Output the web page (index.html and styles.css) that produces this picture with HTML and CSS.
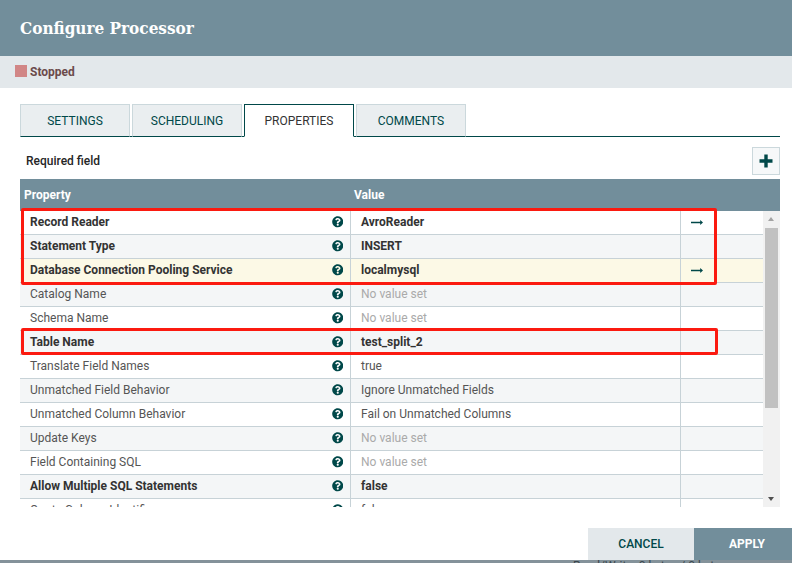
FILE: index.html
```html
<!DOCTYPE html>
<html lang="en">
<head>
<meta charset="utf-8">
<title>Configure Processor</title>
<link rel="stylesheet" href="styles.css">
</head>
<body>
<div class="dialog">
  <header class="title-bar">Configure Processor</header>
  <div class="status-bar"><span class="status-square"></span><span class="status-text">Stopped</span></div>
  <main class="content">
    <nav class="tabs">
      <div class="tab">SETTINGS</div>
      <div class="tab">SCHEDULING</div>
      <div class="tab active">PROPERTIES</div>
      <div class="tab">COMMENTS</div>
    </nav>
    <div class="toolbar">
      <span class="required">Required field</span>
      <button class="add-btn"><svg width="14" height="14" viewBox="0 0 14 14"><path d="M5.3 0.5h3.4v4.8h4.8v3.4H8.7v4.8H5.3V8.7H.5V5.3h4.8z" fill="#004849"/></svg></button>
    </div>
    <div class="grid-head"><div class="hcell hprop">Property</div><div class="hcell">Value</div></div>
    <div class="grid-wrap">
      <div class="rows">
        <div class="row"><div class="c-name b">Record Reader</div><div class="c-help"><svg class="help" viewBox="0 0 512 512"><use href="#q"/></svg></div><div class="c-val b">AvroReader</div><div class="c-act"><svg class="arrow" viewBox="0 0 12 7"><use href="#a"/></svg></div></div>
        <div class="row alt"><div class="c-name b">Statement Type</div><div class="c-help"><svg class="help" viewBox="0 0 512 512"><use href="#q"/></svg></div><div class="c-val b">INSERT</div><div class="c-act"></div></div>
        <div class="row hl"><div class="c-name b">Database Connection Pooling Service</div><div class="c-help"><svg class="help" viewBox="0 0 512 512"><use href="#q"/></svg></div><div class="c-val b">localmysql</div><div class="c-act"><svg class="arrow" viewBox="0 0 12 7"><use href="#a"/></svg></div></div>
        <div class="row alt"><div class="c-name">Catalog Name</div><div class="c-help"><svg class="help" viewBox="0 0 512 512"><use href="#q"/></svg></div><div class="c-val none">No value set</div><div class="c-act"></div></div>
        <div class="row"><div class="c-name">Schema Name</div><div class="c-help"><svg class="help" viewBox="0 0 512 512"><use href="#q"/></svg></div><div class="c-val none">No value set</div><div class="c-act"></div></div>
        <div class="row alt"><div class="c-name b">Table Name</div><div class="c-help"><svg class="help" viewBox="0 0 512 512"><use href="#q"/></svg></div><div class="c-val b">test_split_2</div><div class="c-act"></div></div>
        <div class="row"><div class="c-name">Translate Field Names</div><div class="c-help"><svg class="help" viewBox="0 0 512 512"><use href="#q"/></svg></div><div class="c-val">true</div><div class="c-act"></div></div>
        <div class="row alt"><div class="c-name">Unmatched Field Behavior</div><div class="c-help"><svg class="help" viewBox="0 0 512 512"><use href="#q"/></svg></div><div class="c-val">Ignore Unmatched Fields</div><div class="c-act"></div></div>
        <div class="row"><div class="c-name">Unmatched Column Behavior</div><div class="c-help"><svg class="help" viewBox="0 0 512 512"><use href="#q"/></svg></div><div class="c-val">Fail on Unmatched Columns</div><div class="c-act"></div></div>
        <div class="row alt"><div class="c-name">Update Keys</div><div class="c-help"><svg class="help" viewBox="0 0 512 512"><use href="#q"/></svg></div><div class="c-val none">No value set</div><div class="c-act"></div></div>
        <div class="row"><div class="c-name">Field Containing SQL</div><div class="c-help"><svg class="help" viewBox="0 0 512 512"><use href="#q"/></svg></div><div class="c-val none">No value set</div><div class="c-act"></div></div>
        <div class="row alt"><div class="c-name b">Allow Multiple SQL Statements</div><div class="c-help"><svg class="help" viewBox="0 0 512 512"><use href="#q"/></svg></div><div class="c-val b">false</div><div class="c-act"></div></div>
        <div class="row"><div class="c-name">Quote Column Identifiers</div><div class="c-help"><svg class="help" viewBox="0 0 512 512"><use href="#q"/></svg></div><div class="c-val">false</div><div class="c-act"></div></div>
      </div>
      <div class="scrollbar">
        <div class="sb-up"></div>
        <div class="sb-track"><div class="sb-thumb"></div></div>
        <div class="sb-down"></div>
      </div>
      <div class="mark mark-a"></div>
      <div class="mark mark-b"></div>
    </div>
    <div class="footer">
      <div class="btn cancel">CANCEL</div>
      <div class="btn apply">APPLY</div>
    </div>
  </main>
  <div class="behind">Read/Write  0 bytes / 0 bytes</div>
</div>
<svg class="defs" width="0" height="0">
  <defs>
    <path id="q" fill="#004849" d="M504 256c0 136.997-111.043 248-248 248S8 392.997 8 256C8 119.083 119.043 8 256 8s248 111.083 248 248zM262.655 90c-54.497 0-89.255 22.957-116.549 63.758-3.536 5.286-2.353 12.415 2.715 16.258l34.699 26.31c5.205 3.947 12.621 3.008 16.665-2.122 17.864-22.658 30.113-35.797 57.303-35.797 20.429 0 45.698 13.148 45.698 32.958 0 14.976-12.363 22.667-32.534 33.976C247.128 238.528 216 254.941 216 296v4c0 6.627 5.373 12 12 12h56c6.627 0 12-5.373 12-12v-1.333c0-28.462 83.186-29.647 83.186-106.667 0-58.002-60.165-102-116.531-102zM256 338c-25.365 0-46 20.635-46 46 0 25.364 20.635 46 46 46s46-20.636 46-46c0-25.365-20.635-46-46-46z"/>
    <path id="a" fill="#004849" d="M0 2.7h9.2V1L12 3.5 9.2 6V4.3H0z"/>
  </defs>
</svg>
</body>
</html>
```
FILE: styles.css
```css
* { box-sizing: border-box; }
html, body { margin: 0; height: 100%; overflow: hidden; }
body { font-family: Roboto, "Liberation Sans", sans-serif; font-size: 12px; color: #262626; background: #fff; }
.dialog { display: flex; flex-direction: column; height: 563px; width: 792px; }
.title-bar { height: 56px; background: #728e9b; color: #fff; font-family: "DejaVu Serif", serif; font-stretch: condensed; font-weight: 700; font-size: 17px; line-height: 57px; padding-left: 20px; flex: none; }
.status-bar { height: 32px; background: #e3e8eb; display: flex; align-items: center; padding-left: 15px; flex: none; }
.status-square { width: 12px; height: 12px; background: #d18686; margin-right: 3px; margin-top: -2px; }
.status-text { color: #6b4a4a; font-weight: 700; font-size: 12px; }
.content { flex: none; height: 472px; padding: 16px 0 0 20px; display: flex; flex-direction: column; }
.tabs { display: flex; gap: 2px; width: 760px; height: 33px; border-bottom: 1px solid #004849; flex: none; }
.tab { width: 110px; height: 33px; background: #eaeef0; border: 1px solid #cbd8dc; border-bottom: 1px solid #004849; color: #004849; font-size: 12px; text-align: center; line-height: 32px; }
.tab.active { background: #fff; border: 1px solid #004849; border-bottom: 1px solid #fff; color: #333; }
.toolbar { width: 760px; height: 42px; display: flex; align-items: center; justify-content: space-between; flex: none; padding-top: 6px; }
.required { font-weight: 500; font-size: 12px; padding-left: 6px; color: #262626; }
.add-btn { width: 28px; height: 28px; background: #f6f8f9; border: 1px solid #cbd8dc; padding: 0; display: flex; align-items: center; justify-content: center; }
.grid-head { width: 760px; height: 32px; background: #728e9b; color: #fff; font-weight: 700; font-size: 12px; display: flex; align-items: center; flex: none; }
.hcell { padding-left: 4px; }
.hprop { width: 330px; }
.grid-wrap { position: relative; width: 760px; height: 296px; display: flex; flex: none; }
.rows { width: 743px; height: 296px; overflow: hidden; flex: none; }
.row { display: flex; height: 24px; border-bottom: 1px solid #c7d2d7; line-height: 23px; background: #fff; color: #333; }
.row.alt { background: #f4f6f7; }
.row.hl { background: #fcf9e6; }
.c-name { width: 310px; padding-left: 10px; flex: none; color: #555; }
.c-name.b, .c-val.b { font-weight: 700; color: #333; }
.c-help { width: 20px; flex: none; display: flex; align-items: center; justify-content: flex-start; }
.help { width: 11.5px; height: 11.5px; margin-left: 1.5px; margin-top: -1px; }
.c-val { width: 330px; flex: none; padding-left: 10px; border-left: 1px solid #c7d2d7; color: #555; }
.c-val.none { color: #aaa; }
.c-act { flex: 1; border-left: 1px solid #c7d2d7; display: flex; align-items: center; padding-left: 10px; }
.arrow { width: 12px; height: 7px; margin-top: -1px; }
.scrollbar { width: 17px; flex: none; background: #f1f1f1; display: flex; flex-direction: column; padding: 0 2px; }
.sb-up, .sb-down { height: 17px; flex: none; position: relative; }
.sb-up::after, .sb-down::after { content: ""; position: absolute; left: 3px; width: 0; height: 0; border-left: 3.5px solid transparent; border-right: 3.5px solid transparent; }
.sb-up::after { top: 6px; border-bottom: 4px solid #a3a3a3; }
.sb-down::after { bottom: 6px; border-top: 4px solid #505050; }
.sb-track { flex: 1; }
.sb-thumb { height: 180px; background: #c1c1c1; }
.mark { position: absolute; border: 3px solid #fb1a10; border-radius: 2px; pointer-events: none; }
.mark-a { left: 1px; top: -3px; width: 696px; height: 77px; }
.mark-b { left: 1px; top: 117px; width: 697px; height: 27px; }
.footer { flex: none; margin-top: 21px; width: 772px; height: 32px; display: flex; justify-content: flex-end; }
.btn { height: 32px; line-height: 32px; text-align: center; font-size: 12px; font-weight: 500; }
.cancel { width: 106px; background: #e3e8eb; color: #004849; }
.apply { width: 98px; padding-left: 8px; background: #728e9b; color: #fff; font-weight: 700; }
.behind { flex: none; height: 3px; background: #84929a; color: #3a464c; font-size: 12px; line-height: 12px; padding-left: 573px; overflow: hidden; white-space: pre; }
.defs { position: absolute; }
```
